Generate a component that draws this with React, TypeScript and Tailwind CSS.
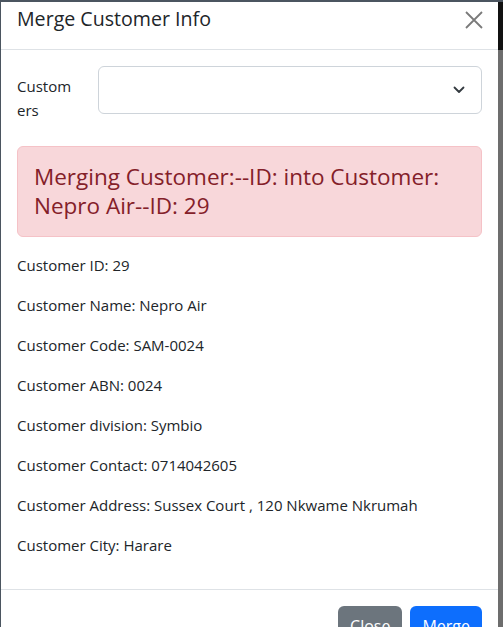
import React from "react";

const details = [
  "Customer ID: 29",
  "Customer Name: Nepro Air",
  "Customer Code: SAM-0024",
  "Customer ABN: 0024",
  "Customer division: Symbio",
  "Customer Contact: 0714042605",
  "Customer Address: Sussex Court , 120 Nkwame Nkrumah",
  "Customer City: Harare",
];

const App = () => {
  return (
    <div
      className="flex h-[627px] w-[503px] overflow-hidden border-t-2 border-l border-[#4b5560] bg-[#6d6d6d] text-[#212529]"
      style={{ fontFamily: '"Open Sans", "Noto Sans", sans-serif' }}
    >
      <div className="flex w-[497px] flex-col bg-white">
        {/* header */}
        <div className="flex h-[48px] shrink-0 items-start justify-between border-b border-[#dee2e6] px-4 pt-[2px]">
          <h5 className="text-[19.6px] leading-[30px] font-medium">Merge Customer Info</h5>
          <button className="mt-[7px] mr-[-1px] text-[#7a7a7a]" aria-label="Close">
            <svg width="18" height="18" viewBox="0 0 18 18">
              <path d="M1 1L17 17M17 1L1 17" stroke="currentColor" strokeWidth="1.8" />
            </svg>
          </button>
        </div>

        {/* body */}
        <div className="p-4">
          <div className="mb-[17px] flex gap-2">
            <label className="w-[73px] shrink-0 pt-[8px] pb-[7px] text-[15px] leading-[24px]">
              Custom
              <br />
              ers
            </label>
            <div className="flex h-[48px] flex-1 items-center justify-end rounded-[6px] border border-[#ced4da] pr-[16px]">
              <svg width="12" height="8" viewBox="0 0 12 8" className="text-[#343a40]">
                <path d="M1.5 1.5L6 6L10.5 1.5" fill="none" stroke="currentColor" strokeWidth="1.8" strokeLinecap="round" strokeLinejoin="round" />
              </svg>
            </div>
          </div>

          <div className="mb-4 rounded-[6px] border border-[#f5c2c7] bg-[#f8d7da] px-4 py-4 text-[22.5px] leading-[28.5px] font-medium text-[#842029]">
            Merging Customer:--ID: into Customer: Nepro Air--ID: 29
          </div>

          {details.map((d) => (
            <p key={d} className="mb-4 text-[15px] leading-[24px]">
              {d}
            </p>
          ))}
        </div>

        {/* footer */}
        <div className="flex justify-end gap-2 border-t border-[#dee2e6] px-4 pt-4">
          <button className="h-[40px] rounded-[6px] bg-[#6c757d] px-3 text-[16px] text-white">Close</button>
          <button className="h-[40px] rounded-[6px] bg-[#0d6efd] px-3 text-[16px] text-white">Merge</button>
        </div>
      </div>

      {/* backdrop strip on the right */}
      <div className="flex w-[5px] flex-col">
        <div className="h-[48px] bg-[#111]" />
        <div className="flex-1 bg-[#6d6d6d]" />
      </div>
    </div>
  );
};

export default App;
